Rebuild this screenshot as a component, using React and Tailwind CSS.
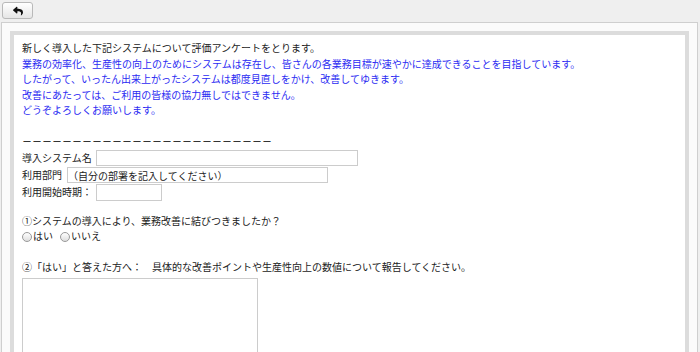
import { FaReply } from 'react-icons/fa'

export default function App() {
  const font = { fontFamily: '"Noto Sans CJK JP", "Noto Sans", sans-serif' }

  return (
    <div className="w-[700px] h-[352px] overflow-hidden bg-[#efefef] text-[10px] leading-[15.5px] text-[#222]" style={font}>
      {/* toolbar */}
      <div className="h-[22px] pt-[2px] pl-[2px]">
        <button className="w-[31px] h-[17px] rounded-[3px] border border-[#b9b9b9] bg-gradient-to-b from-white to-[#e6e6e6] flex items-center justify-center">
          <FaReply className="w-[10px] h-[10px] text-[#111]" />
        </button>
      </div>

      {/* frame */}
      <div className="ml-[1px] mr-[2px] h-[330px] border-t border-l border-r border-[#cfcfcf] bg-[#fbfbfb] pt-[8px] px-[8px]">
        <div className="h-full border-4 border-b-0 border-[#dcdcdc] bg-white pt-[5px] pl-[8px]">
          <p>新しく導入した下記システムについて評価アンケートをとります。</p>
          <div className="text-[#2b2bf2]">
            <p>業務の効率化、生産性の向上のためにシステムは存在し、皆さんの各業務目標が速やかに達成できることを目指しています。</p>
            <p>したがって、いったん出来上がったシステムは都度見直しをかけ、改善してゆきます。</p>
            <p>改善にあたっては、ご利用の皆様の協力無しではできません。</p>
            <p>どうぞよろしくお願いします。</p>
          </div>
          <p>&nbsp;</p>
          <p className="text-[#333] font-semibold">－－－－－－－－－－－－－－－－－－－－－－－－－</p>

          <div className="flex items-center h-[17px] mt-[1px]">
            <span>導入システム名</span>
            <input className="ml-[4px] w-[262px] h-[16px] border border-[#cccccc] bg-white" />
          </div>
          <div className="flex items-center h-[17px]">
            <span>利用部門</span>
            <input
              className="ml-[5px] w-[261px] h-[16px] border border-[#cccccc] bg-white text-[10px] text-[#222] px-0"
              style={font}
              defaultValue="（自分の部署を記入してください）"
            />
          </div>
          <div className="flex items-center h-[17px]">
            <span>利用開始時期：</span>
            <input className="ml-[4px] w-[66px] h-[17px] border border-[#cccccc] bg-white" />
          </div>

          <div className="h-[12px]" />
          <p>①システムの導入により、業務改善に結びつきましたか？</p>
          <div className="flex items-center h-[15.5px]">
            <span className="w-[10px] h-[10px] rounded-full border border-[#9a9a9a] bg-gradient-to-b from-white to-[#dedede] mt-[2px]" />
            <span className="ml-[1px]">はい</span>
            <span className="ml-[7px] w-[10px] h-[10px] rounded-full border border-[#9a9a9a] bg-gradient-to-b from-white to-[#dedede] mt-[2px]" />
            <span className="ml-[1px]">いいえ</span>
          </div>
          <p>&nbsp;</p>
          <p>②「はい」と答えた方へ：　具体的な改善ポイントや生産性向上の数値について報告してください。</p>
          <textarea className="block mt-[3px] w-[236px] h-[90px] border border-[#cccccc] bg-white resize-none" />
        </div>
      </div>
    </div>
  )
}
